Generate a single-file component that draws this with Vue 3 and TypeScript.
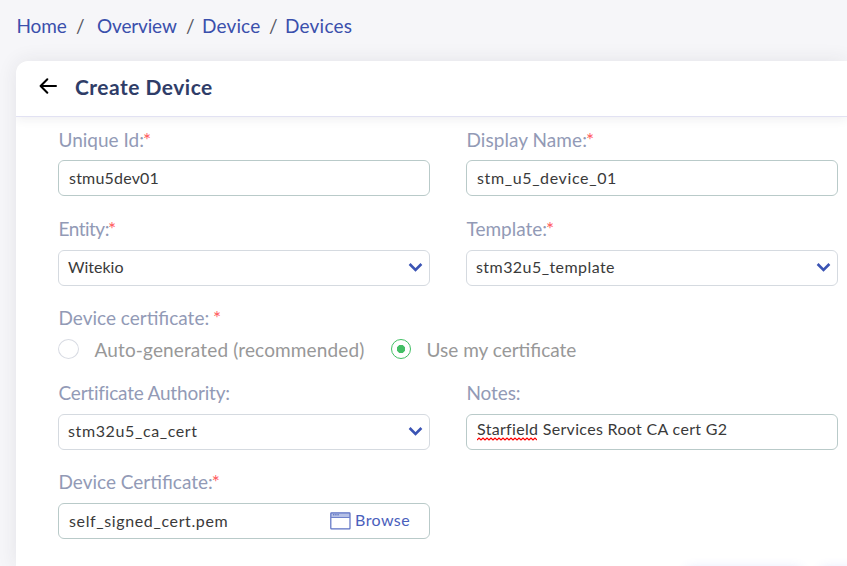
<script setup lang="ts">
import { ref } from 'vue'

interface Crumb { text: string; cls: string }

const crumbs: Crumb[] = [
  { text: 'Home', cls: 'home' },
  { text: 'Overview', cls: 'overview' },
  { text: 'Device', cls: 'device' },
  { text: 'Devices', cls: 'devices' },
]
const source = ref<'auto' | 'own'>('own')
</script>

<template>
  <div class="page">
    <nav class="crumbs">
      <template v-for="(c, i) in crumbs" :key="c.text">
        <span v-if="i" class="slash">/</span>
        <a :class="['crumb', c.cls]">{{ c.text }}</a>
      </template>
    </nav>

    <section class="card">
      <header class="head">
        <svg class="back" width="18" height="16" viewBox="0 0 18 16">
          <path d="M8.3 1.2 1.6 8l6.7 6.8M1.8 8H17" fill="none" stroke="#000" stroke-width="2" stroke-linecap="round" stroke-linejoin="round" />
        </svg>
        <h1>Create Device</h1>
      </header>

      <form class="form">
        <div class="row first">
          <div class="field">
            <label>Unique Id:<i>*</i></label>
            <div class="box"><span class="t-uid">stmu5dev01</span></div>
          </div>
          <div class="field">
            <label class="l-name">Display Name:<i>*</i></label>
            <div class="box"><span class="t-name">stm_u5_device_01</span></div>
          </div>
        </div>

        <div class="row second">
          <div class="field">
            <label class="l-entity">Entity:<i>*</i></label>
            <div class="box select">
              <span>Witekio</span>
              <svg class="chev" width="15" height="11" viewBox="0 0 15 11"><path d="M1.6 2 7.5 8 13.4 2" /></svg>
            </div>
          </div>
          <div class="field">
            <label>Template:<i>*</i></label>
            <div class="box select">
              <span class="t-tpl">stm32u5_template</span>
              <svg class="chev" width="15" height="11" viewBox="0 0 15 11"><path d="M1.6 2 7.5 8 13.4 2" /></svg>
            </div>
          </div>
        </div>

        <div class="choice">
          <label class="l-choice">Device certificate: <i>*</i></label>
          <div class="radios">
            <span class="radio" :class="{ on: source === 'auto' }" @click="source = 'auto'"></span>
            <span class="opt auto">Auto-generated (recommended)</span>
            <span class="radio" :class="{ on: source === 'own' }" @click="source = 'own'"></span>
            <span class="opt">Use my certificate</span>
          </div>
        </div>

        <div class="row third">
          <div class="field">
            <label class="l-ca">Certificate Authority:</label>
            <div class="box select">
              <span class="t-ca">stm32u5_ca_cert</span>
              <svg class="chev" width="15" height="11" viewBox="0 0 15 11"><path d="M1.6 2 7.5 8 13.4 2" /></svg>
            </div>
          </div>
          <div class="field">
            <label class="l-notes">Notes:</label>
            <div class="box notes">
              <span class="t-notes"><span class="miss">Starfield<svg class="wave" width="60" height="4" viewBox="0 0 60 4"><path d="M0 3 2 1 4 3 6 1 8 3 10 1 12 3 14 1 16 3 18 1 20 3 22 1 24 3 26 1 28 3 30 1 32 3 34 1 36 3 38 1 40 3 42 1 44 3 46 1 48 3 50 1 52 3 54 1 56 3 58 1 60 3" /></svg></span> Services Root CA cert G2</span>
            </div>
          </div>
        </div>

        <div class="row fourth">
          <div class="field">
            <label class="l-dc">Device Certificate:<i>*</i></label>
            <div class="box file">
              <span class="t-file">self_signed_cert.pem</span>
              <a class="browse">
                <svg width="21" height="18" viewBox="0 0 21 18">
                  <rect x="1" y="1" width="19" height="4.5" fill="#b5c0e6" />
                  <path d="M3 2.8h6" stroke="#4a62b8" stroke-width="1" stroke-dasharray="1.4 .8" />
                  <rect x=".8" y=".8" width="19.2" height="16" rx=".6" fill="none" stroke="#5b70c4" stroke-width="1.2" />
                  <path d="M1 5.5h19" stroke="#6f82cc" stroke-width="1" />
                </svg>
                <span>Browse</span>
              </a>
            </div>
          </div>
        </div>
      </form>

      <footer class="actions"><span class="btn cancel"></span><span class="btn save"></span></footer>
    </section>
  </div>
</template>

<style>
body { background: #f6f6f9; overflow: hidden; }
</style>

<style scoped>
* { box-sizing: border-box; }
.page { height: 566px; overflow: hidden; background: #f6f6f9; font-family: "Lato", "Open Sans", sans-serif; }
.crumbs { display: flex; height: 61px; padding: 14px 0 0 16.5px; font-size: 19px; line-height: 24px; color: #3a4fac; }
.slash { width: 7px; margin: 0 9px; color: #55555f; text-align: center; }
.home { width: 50.5px; letter-spacing: -.15px; }
.overview { width: 80px; margin-left: 5px; letter-spacing: -.15px; }
.device { width: 58px; letter-spacing: .15px; }
.devices { letter-spacing: .22px; }
.card { position: relative; display: flex; flex-direction: column; height: 505px; margin-left: 16px; background: #fff; border-top-left-radius: 12px; box-shadow: 0 0 20px rgba(40, 40, 60, .09); overflow: hidden; }
.head { display: flex; flex: none; align-items: flex-start; height: 56px; padding: 0 0 0 23px; border-bottom: 1px solid #e2e2f3; box-shadow: 0 2px 10px rgba(40, 40, 60, .08); }
.back { margin-top: 17px; }
h1 { margin: 13px 0 0 18px; font-size: 21px; line-height: 26px; font-weight: 700; letter-spacing: .48px; color: #2f3d68; }
.form { padding: 11px 9px 0 42px; }
.row { display: grid; grid-template-columns: 372px 372px; column-gap: 36px; }
.second { margin-top: 21px; }
.choice { margin-top: 20px; }
.third { margin-top: 19px; }
.fourth { margin-top: 20px; }
label { display: block; height: 33px; padding-left: .5px; font-size: 19px; line-height: 24px; color: #929ab6; white-space: pre; }
.first label { height: 32px; }
label i { font-style: normal; font-size: 19px; margin-left: -1px; letter-spacing: 0; color: #ff5a5c; line-height: 1; }
.l-name { letter-spacing: .06px; }
.l-entity { letter-spacing: -.5px; }
.l-ca { letter-spacing: -.2px; }
.l-notes { letter-spacing: -.1px; }
.box { display: flex; align-items: flex-start; height: 36px; padding: 7px 10px 0; border: 1px solid #b9cac9; border-radius: 6px; background: #fff; font-size: 16px; line-height: 20px; color: #3a3a3a; }
.select { padding: 6px 6px 0 9px; justify-content: space-between; border-color: #d5dae0; }
.chev { margin-top: 5px; fill: none; stroke: #3b54b4; stroke-width: 2.6; }
.t-uid { letter-spacing: .2px; }
.t-name { letter-spacing: .63px; }
.t-tpl { letter-spacing: .44px; }
.t-ca { letter-spacing: .62px; }
.t-notes { letter-spacing: .32px; }
.t-file { letter-spacing: .63px; }
.notes { padding-top: 4px; }
.miss { position: relative; }
.wave { position: absolute; left: 0; top: 18px; fill: none; stroke: #f00; stroke-width: 1.2; }
.file { justify-content: space-between; padding-right: 19px; }
.browse { display: flex; gap: 4px; color: #4a60bc; letter-spacing: .4px; }
.browse svg { margin-top: 1px; }
.browse span { margin-top: -1px; }
.choice label { height: 24px; }
.radios { display: flex; align-items: flex-start; height: 32px; padding-top: 8px; font-size: 19px; line-height: 24px; color: #989898; }
.radio { flex: none; width: 21px; height: 20px; margin-top: 1px; border: 1px solid #d8dbe3; border-radius: 50%; }
.radio.on { width: 20px; border: 1px solid #43bf65; background: radial-gradient(circle, #43bf65 0 3.8px, transparent 4.5px); }
.opt { margin-left: 16px; }
.auto { width: 270px; margin-right: 26px; margin-left: 15.5px; letter-spacing: .14px; white-space: nowrap; }
.actions { position: absolute; top: 508px; left: 670px; display: flex; gap: 18px; }
.btn { width: 116px; height: 36px; border-radius: 6px; box-shadow: 0 0 12px rgba(70, 100, 240, .2); }
</style>
